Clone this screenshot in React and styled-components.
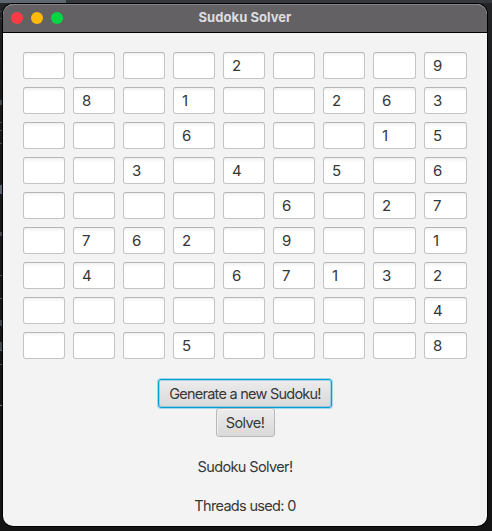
import React from 'react';
import styled, { createGlobalStyle } from 'styled-components';

const GlobalStyle = createGlobalStyle`
  *, *::before, *::after { box-sizing: border-box; }
  html, body { margin: 0; height: 100%; overflow: hidden; background: #141415; }
  button, input { font: inherit; color: inherit; }
`;

const Desktop = styled.div`
  position: relative;
  width: 492px;
  height: 531px;
  padding: 4px 5px 5px 3px;
  overflow: hidden;
  background:
    linear-gradient(90deg, #5f6770 0 66px, #34383c 66px) 0 0 / 100% 3px no-repeat,
    linear-gradient(#242526, #202122 26px, #171819 130px, #141415);
  font-family: Inter, 'Liberation Sans', sans-serif;
  color: #363636;
`;

const EditorMark = styled.i`
  position: absolute;
  left: 0;
  top: ${(p) => p.$y}px;
  width: 2px;
  height: ${(p) => p.$h}px;
  background: ${(p) => p.$color || '#43484e'};
`;

const Window = styled.main`
  position: relative;
  width: 484px;
  height: 522px;
  display: flex;
  flex-direction: column;
  overflow: hidden;
  border-radius: 10px;
  background: #f3f3f3;
  box-shadow: 0 0 0 1px #000;
`;

const TitleBar = styled.header`
  flex: none;
  height: 29px;
  display: grid;
  grid-template-columns: 60px 1fr 60px;
  align-items: center;
  background: #646164;
  border-bottom: 1px solid #000;
  box-shadow: inset 0 1px #858386;
  border-radius: 10px 10px 0 0;
`;

const Lights = styled.div`
  display: flex;
  gap: 8px;
  padding-left: 8px;
`;

const Light = styled.span`
  width: 12px;
  height: 12px;
  border-radius: 50%;
  background: ${(p) => p.$color};
`;

const Title = styled.h1`
  margin: 0;
  padding-bottom: 2px;
  text-align: center;
  font-size: 13px;
  line-height: 16px;
  font-weight: 700;
  letter-spacing: 0.05px;
  color: #dfdde0;
`;

const Board = styled.section`
  flex: none;
  display: grid;
  grid-template-columns: repeat(7, 42px) 43px 43px;
  grid-auto-rows: 27px;
  gap: 8px;
  margin: 19px 0 0 20px;
`;

const Cell = styled.input`
  width: 100%;
  height: 100%;
  min-width: 0;
  padding: 0 0 0 8px;
  border: 1px solid #c4c4c4;
  border-top-color: #b5b5b5;
  border-radius: 3px;
  outline: none;
  background: linear-gradient(#f1f1f1, #fff 4px);
  font-size: 15px;
  line-height: 25px;
`;

const Controls = styled.section`
  display: flex;
  flex-direction: column;
  align-items: center;
  margin-top: 20px;
`;

const Button = styled.button`
  width: ${(p) => p.$width}px;
  height: 29px;
  padding: 0;
  border: 1px solid ${(p) => (p.$focused ? '#039ed3' : '#b8b8b8')};
  border-radius: 3px;
  outline: none;
  background: linear-gradient(#ececec, #d9d9d9);
  box-shadow: ${(p) =>
    p.$focused
      ? '0 0 0 1px rgba(3, 158, 211, 0.32), inset 0 0 0 1px rgba(3, 158, 211, 0.3)'
      : 'inset 0 1px #f6f6f6, inset 1px 0 #eee'};
  font-size: 14.5px;
  line-height: 26px;
  letter-spacing: ${(p) => p.$tracking}px;
  white-space: nowrap;
`;

const Status = styled.p`
  margin: 20px 0 0;
  font-size: 14.5px;
  line-height: 19px;
  letter-spacing: ${(p) => p.$tracking}px;
  white-space: nowrap;
`;

const puzzle = [
  '....2...9',
  '.8.1..263',
  '...6...15',
  '..3.4.5.6',
  '.....6.27',
  '.762.9..1',
  '.4..67132',
  '........4',
  '...5....8',
];

const marks = [
  [11, 1], [18, 1], [100, 5], [122, 1], [130, 1], [143, 1],
  [185, 9, '#59636d'], [232, 4], [275, 1], [298, 1, '#59636d'],
  [320, 6], [342, 8], [350, 1, '#59636d'], [364, 1], [405, 1, '#6f7f90'],
];

export default function App() {
  return (
    <Desktop>
      <GlobalStyle />
      {marks.map(([y, h, color]) => (
        <EditorMark key={y} $y={y} $h={h} $color={color} />
      ))}
      <Window>
        <TitleBar>
          <Lights>
            <Light $color="#ff3b48" />
            <Light $color="#ffb90b" />
            <Light $color="#00d742" />
          </Lights>
          <Title>Sudoku Solver</Title>
        </TitleBar>
        <Board>
          {puzzle.flatMap((row, r) =>
            [...row].map((value, c) => (
              <Cell
                key={`${r}-${c}`}
                aria-label={`Row ${r + 1}, column ${c + 1}`}
                defaultValue={value === '.' ? '' : value}
              />
            ))
          )}
        </Board>
        <Controls>
          <Button $width={174} $tracking={-0.75} $focused>Generate a new Sudoku!</Button>
          <Button $width={59} $tracking={-0.6}>Solve!</Button>
          <Status $tracking={-0.62}>Sudoku Solver!</Status>
          <Status $tracking={-0.68}>Threads used: 0</Status>
        </Controls>
      </Window>
    </Desktop>
  );
}
